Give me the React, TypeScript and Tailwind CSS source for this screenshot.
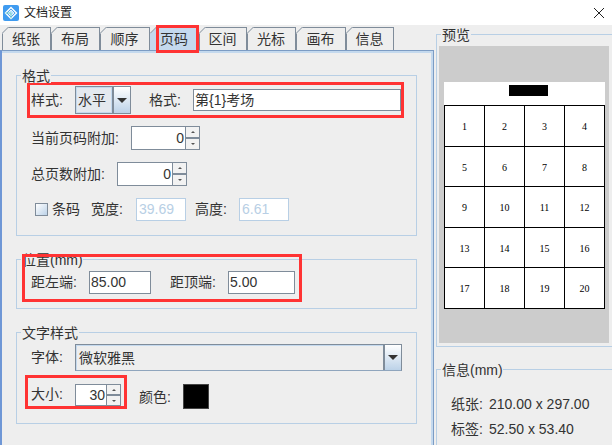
import React from "react";

const font = { fontFamily: '"Liberation Sans", "Noto Sans CJK SC", sans-serif' };

const tabs = [
  { name: "纸张", w: "w-[49px]" },
  { name: "布局", w: "w-[49px]" },
  { name: "顺序", w: "w-[50px]" },
  { name: "页码", w: "w-[49px]", active: true },
  { name: "区间", w: "w-[48px]" },
  { name: "光标", w: "w-[49px]" },
  { name: "画布", w: "w-[50px]" },
  { name: "信息", w: "w-[48px]" },
];

const Logo = () => (
  <svg width="16" height="16" viewBox="0 0 16 16" className="shrink-0">
    <rect width="16" height="16" rx="2" fill="#3f9bf0" />
    <path d="M8 2.5 13.5 8 8 13.5 2.5 8Z" fill="none" stroke="#fff" strokeWidth="1.4" />
    <path d="M5 8 8 5l3 3-3 3Z" fill="#b5e3fb" stroke="#fff" strokeWidth="0.8" />
    <path d="M2.5 8H8M8 8v5.5" stroke="#7fd0c8" strokeWidth="1" />
  </svg>
);

const Tab = ({ name, w, active }: { name: string; w: string; active?: boolean }) => (
  <div className={`relative h-[23px] ${w} border-r border-t border-l border-[#7f8c9a] flex items-center justify-center text-[14px] text-[#333] ${active ? "bg-[#c4d9ee] border-[#c4d9ee]" : ""}`}>
    <svg width="7" height="7" viewBox="0 0 7 7" className="absolute -left-px -top-px">
      <path d="M0 0H7L0 7Z" fill="#eeeeee" />
      <path d="M0 6.5 6.5 0" stroke="#7f8c9a" fill="none" />
    </svg>
    <span className="-ml-px">{name}</span>
    {active && <div className="absolute left-[5px] -right-px -top-[3px] -bottom-[3px] border-[3px] border-[#ff3333]" />}
  </div>
);

const Group = ({ title, legendW, className, children }: { title: string; legendW: string; className: string; children?: React.ReactNode }) => (
  <div className={`relative border border-[#b8cfe5] ${className}`}>
    <div className={`absolute -top-[7px] left-[4px] h-[14px] ${legendW} bg-[#eeeeee] px-[1px] text-[14px] leading-[14px] text-[#333] whitespace-nowrap`}>
      {title}
    </div>
    {children}
  </div>
);

const TextBox = ({ value, className }: { value: string; className: string }) => (
  <div className={`bg-white border border-[#7f8c9a] flex items-center px-[1px] text-[14px] text-[#333] ${className}`}>
    {value}
  </div>
);

const DisabledBox = ({ value, className }: { value: string; className: string }) => (
  <div className={`bg-white border border-[#b8cfe5] flex items-center px-[2px] text-[14px] text-[#b8cfe5] ${className}`}>
    {value}
  </div>
);

const Arrow = () => (
  <div className="w-[18px] self-stretch border-l-2 border-[#7f8c9a] bg-gradient-to-b from-white to-[#bcd2e8] flex items-center justify-center">
    <div className="border-x-[5px] border-x-transparent border-t-[5px] border-t-[#333]" />
  </div>
);

const Spinner = ({ value, className, numW }: { value: string; className: string; numW: string }) => (
  <div className={`flex border border-[#7f8c9a] bg-white ${className}`}>
    <div className={`${numW} flex items-center justify-end pr-[1px] text-[14px] text-[#333]`}>{value}</div>
    <div className="flex-1 flex flex-col border-l border-[#7f8c9a] bg-[#f2f2f2]">
      <div className="flex-1 flex items-center justify-center border-b-2 border-[#7f8c9a]">
        <div className="border-x-[2px] border-x-transparent border-b-[2px] border-b-[#555]" />
      </div>
      <div className="flex-1 flex items-center justify-center">
        <div className="border-x-[2px] border-x-transparent border-t-[2px] border-t-[#555]" />
      </div>
    </div>
  </div>
);

const Info = ({ k, v }: { k: string; v: string }) => (
  <div className="flex h-[25px] items-center text-[14px] text-[#333] whitespace-pre">
    <span className="w-[38px]">{k}:</span>
    {v}
  </div>
);

export default function App() {
  const cells = Array.from({ length: 20 }, (_, i) => i + 1);

  return (
    <div className="w-[612px] h-[445px] overflow-hidden bg-[#eeeeee] flex flex-col" style={font}>
      {/* Title bar */}
      <div className="h-[25px] bg-white flex items-center pl-[3px] pr-[7px] shrink-0">
        <Logo />
        <span className="ml-[5px] text-[12px] text-[#222]">文档设置</span>
        <svg width="12" height="12" viewBox="0 0 12 12" className="ml-auto">
          <path d="M1 1 11 11M11 1 1 11" stroke="#222" strokeWidth="1" />
        </svg>
      </div>

      <div className="flex flex-1 min-h-0">
        {/* Left side */}
        <div className="w-[434px] shrink-0 flex flex-col">
          <div className="flex pl-[2px] pt-[2px] h-[25px] shrink-0">
            {tabs.map((t) => (
              <Tab key={t.name} {...t} />
            ))}
          </div>
          <div className="flex-1 border-l-2 border-t border-r border-l-[#6f97d6] border-t-[#7c9cc4] border-r-[#7c9cc4]">
            <div className="h-full border-t-2 border-r-2 border-[#c4d9ee] pl-[14px] pr-[14px] pt-[22px]">
              <Group title="格式" legendW="w-[30px]" className="h-[161px] pt-[6px] pl-[10px]">
                <div className="w-[377px] h-[36px] border-[3px] border-[#ff3333] flex items-center pl-[1px]">
                  <span className="w-[44px] text-[14px] text-[#333]">样式:</span>
                  <div className="w-[56px] h-[28px] flex border border-[#7f8c9a] bg-[#eeeeee]">
                    <span className="flex-1 pl-[1px] border border-[#c4d9ee] bg-[#e4e9ef] text-[14px] leading-[24px] text-[#333]">水平</span>
                    <Arrow />
                  </div>
                  <span className="ml-[18px] w-[44px] text-[14px] text-[#333]">格式:</span>
                  <TextBox value="第{1}考场" className="w-[208px] h-[22px]" />
                </div>
                <div className="flex items-center mt-[8px] pl-[4px] h-[24px]">
                  <span className="w-[100px] text-[14px] text-[#333]">当前页码附加:</span>
                  <Spinner value="0" className="w-[69px] h-[24px]" numW="w-[53px]" />
                </div>
                <div className="flex items-center mt-[12px] pl-[4px] h-[24px]">
                  <span className="w-[86px] text-[14px] text-[#333]">总页数附加:</span>
                  <Spinner value="0" className="w-[70px] h-[24px]" numW="w-[54px]" />
                </div>
                <div className="flex items-center mt-[12px] pl-[8px] h-[23px] text-[14px] text-[#333]">
                  <div className="w-[13px] h-[13px] border border-[#7f8c9a] bg-gradient-to-br from-white to-[#bcd2e8]" />
                  <span className="ml-[4px] w-[39px]">条码</span>
                  <span className="w-[45px]">宽度:</span>
                  <DisabledBox value="39.69" className="w-[50px] h-[23px]" />
                  <span className="ml-[9px] w-[44px]">高度:</span>
                  <DisabledBox value="6.61" className="w-[50px] h-[23px]" />
                </div>
              </Group>

              <Group title="位置(mm)" legendW="w-[62px]" className="mt-[23px] h-[50px]">
                <div className="absolute left-[5px] -top-[6px] w-[280px] h-[48px] border-[3px] border-[#ff3333] flex items-center pl-[6px] pt-[8px] text-[14px] text-[#333]">
                  <span className="w-[58px]">距左端:</span>
                  <TextBox value="85.00" className="w-[62px] h-[23px]" />
                  <span className="ml-[19px] w-[58px]">距顶端:</span>
                  <TextBox value="5.00" className="w-[67px] h-[23px]" />
                </div>
              </Group>

              <Group title="文字样式" legendW="w-[58px]" className="mt-[23px] h-[92px] pt-[11px] pl-[8px]">
                <div className="flex items-center pl-[6px] h-[27px] text-[14px] text-[#333]">
                  <span className="w-[44px]">字体:</span>
                  <div className="w-[327px] h-[27px] flex border border-[#7f8c9a] border-b-[#8fa5bd]">
                    <span className="flex-1 pl-[2px] border-l border-t border-[#c4d9ee] leading-[24px]">微软雅黑</span>
                    <Arrow />
                  </div>
                </div>
                <div className="flex items-start mt-[4px]">
                  <div className="w-[102px] h-[34px] border-[3px] border-[#ff3333] flex items-start pl-[3px] text-[14px] text-[#333]">
                    <span className="w-[44px] mt-[6px]">大小:</span>
                    <Spinner value="30" className="w-[46px] h-[22px] mt-[6px]" numW="w-[30px]" />
                  </div>
                  <span className="ml-[12px] w-[44px] mt-[12px] text-[14px] text-[#333]">颜色:</span>
                  <div className="w-[26px] h-[25px] mt-[9px] bg-black border border-[#444]" />
                </div>
              </Group>
            </div>
          </div>
        </div>

        {/* Right side */}
        <div className="flex-1 pl-[2px] pt-[9px]">
          <Group title="预览" legendW="w-[30px]" className="h-[313px] border-r-0 pl-[2px] pt-[11px] pr-[3px]">
            <div className="h-[297px] bg-[#cccccc] pl-[5px] pr-[4px] pt-[36px]">
              <div className="h-[23px] bg-white flex justify-center pt-[3px] pl-[8px]">
                <div className="w-[39px] h-[11px] bg-black" />
              </div>
              <div className="grid grid-cols-4 border-t border-l border-black bg-white">
                {cells.map((n) => (
                  <div key={n} className="h-[40.5px] pt-[2px] border-r border-b border-black flex items-center justify-center text-[10px] text-black" style={{ fontFamily: '"Liberation Serif", serif' }}>
                    {n}
                  </div>
                ))}
              </div>
            </div>
          </Group>
          <Group title="信息(mm)" legendW="w-[62px]" className="mt-[22px] h-[90px] border-r-0 pl-[14px] pt-[22px]">
            <Info k="纸张" v="210.00 x 297.00" />
            <Info k="标签" v="52.50 x 53.40" />
          </Group>
        </div>
      </div>
    </div>
  );
}
